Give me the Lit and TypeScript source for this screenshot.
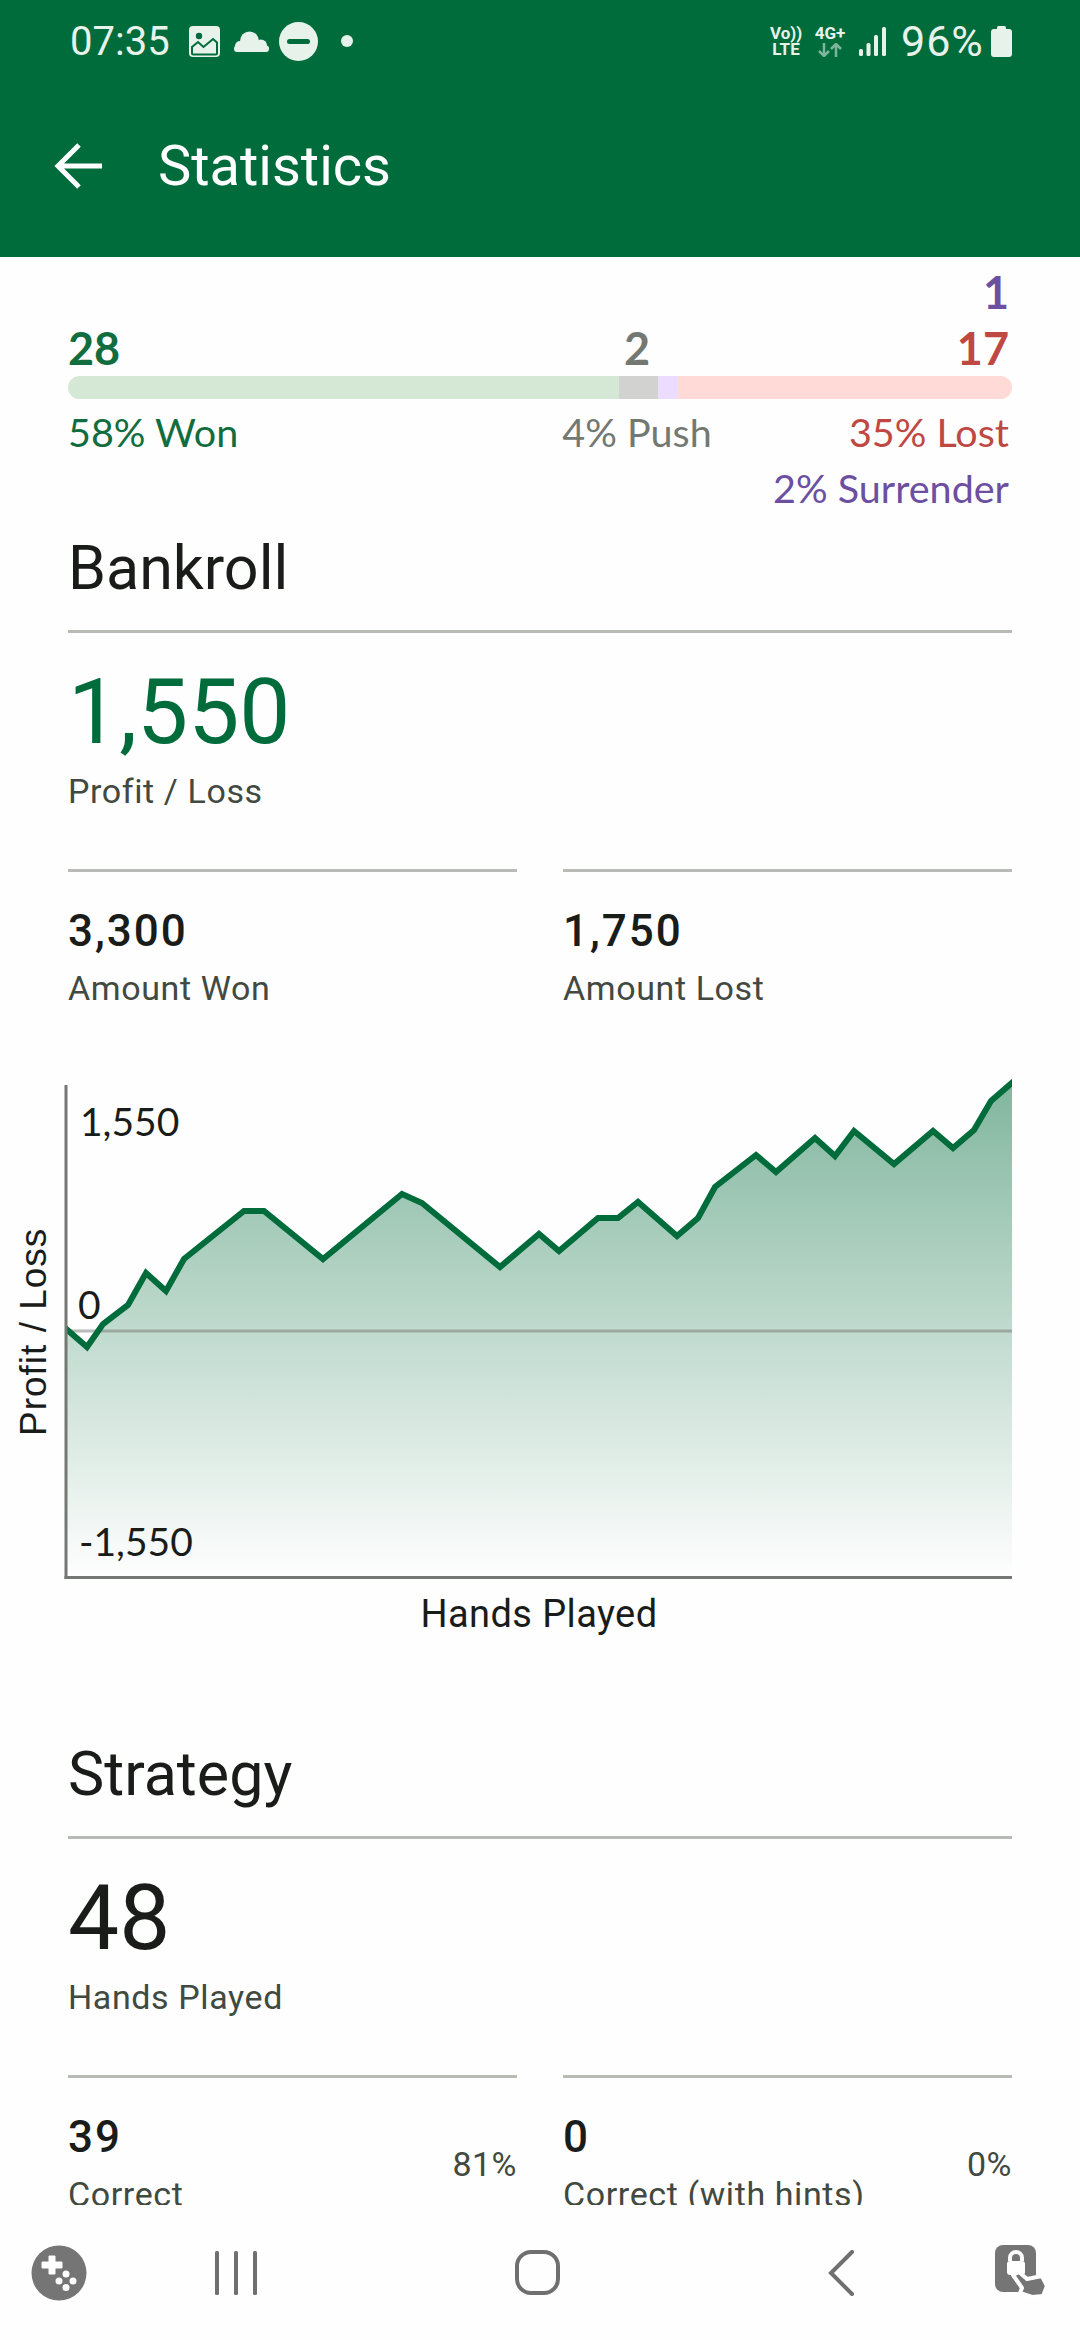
import { LitElement, html, css } from 'lit';
import { customElement } from 'lit/decorators.js';

// chart polyline, screen coordinates (svg viewBox starts at y=1060)
const CURVE: [number, number][] = [
  [64, 1328], [87, 1348], [103, 1325], [128, 1306], [146, 1274], [166, 1292], [184, 1260],
  [244, 1212], [264, 1212], [323, 1260], [402, 1195], [422, 1204], [500, 1268], [539, 1235],
  [559, 1252], [598, 1219], [618, 1219], [638, 1203], [677, 1237], [698, 1219], [715, 1188],
  [756, 1156], [776, 1173], [815, 1139], [835, 1157], [854, 1132], [894, 1165], [933, 1132],
  [953, 1149], [974, 1131], [991, 1102], [1014, 1082],
];

const TALLY = [
  { n: 28, color: '#d5e8d6' },
  { n: 2, color: '#d2d3d1' },
  { n: 1, color: '#ecdcff' },
  { n: 17, color: '#ffdad6' },
];

@customElement('app-root')
export class AppRoot extends LitElement {
  static styles = css`
    :host {
      display: block;
      width: 1080px;
      height: 2340px;
      background: #fefefe;
      font-family: Roboto, sans-serif;
      color: #1a1c19;
    }

    .screen {
      height: 2340px;
      display: flex;
      flex-direction: column;
      overflow: hidden;
    }

    /* Status bar and app bar */
    .top {
      background: #006c3b;
      height: 257px;
      flex: none;
    }

    .status {
      height: 80px;
      padding: 2px 68px 0 70px;
      display: flex;
      align-items: center;
      justify-content: space-between;
      color: #e7f2eb;
      font-size: 40px;
      box-sizing: border-box;
    }

    .status-group {
      display: flex;
      align-items: center;
    }

    .status svg {
      display: block;
      flex: none;
    }

    .volte {
      width: 32px;
      font-size: 17px;
      line-height: 16px;
      font-weight: 700;
      margin-right: 11px;
      text-align: center;
      white-space: nowrap;
    }

    .net {
      width: 34px;
      margin-right: 12px;
      font-size: 17px;
      line-height: 15px;
      font-weight: 700;
      text-align: center;
      white-space: nowrap;
    }

    .net svg {
      margin: 2px auto 0;
    }

    .battery-pct {
      margin-left: 15px;
      font-size: 43px;
      letter-spacing: 1px;
      width: 83px;
      white-space: nowrap;
    }

    .appbar {
      height: 177px;
      display: flex;
      align-items: center;
      color: #fff;
      padding-bottom: 6px;
      box-sizing: border-box;
    }

    .back {
      margin-left: 52px;
      margin-right: 56px;
      display: block;
    }

    .title {
      font-size: 56px;
      line-height: 64px;
    }

    /* Scrolling content */
    .content {
      flex: 1;
      min-height: 0;
      overflow: hidden;
      padding: 7px 68px 0;
    }

    .tally-line {
      display: grid;
      grid-template-columns: 419px 300px 1fr;
      font-family: Lato, sans-serif;
    }

    .tally-line > div:nth-child(2) {
      text-align: center;
    }

    .tally-line > div:nth-child(3) {
      text-align: right;
      padding-right: 3px;
    }

    .count {
      font-size: 45px;
      line-height: 56px;
      font-weight: 700;
    }

    .pct {
      font-size: 39.5px;
      line-height: 55px;
    }

    .bar {
      display: flex;
      height: 23px;
      border-radius: 12px;
      overflow: hidden;
    }

    .pct-first {
      margin-top: 5px;
      margin-bottom: 1px;
    }

    .pct-last {
      font-family: Lato, sans-serif;
      text-align: right;
      padding-right: 3px;
    }

    .won { color: #116d40; }
    .push { color: #747872; }
    .lost { color: #bf4843; }
    .surrender { color: #6c4fa0; }

    h2 {
      margin: 0;
      font-weight: 400;
      font-size: 61px;
      line-height: 70px;
    }

    .head {
      margin-top: 18px;
      padding-bottom: 27px;
      border-bottom: 3px solid #b8bab6;
    }

    .head.second {
      margin-top: 100px;
    }

    .big {
      font-size: 91px;
      line-height: 114px;
    }

    .big.green {
      color: #006c3b;
    }

    .label {
      font-size: 34px;
      line-height: 44px;
      letter-spacing: 0.6px;
      color: #424940;
      white-space: nowrap;
    }

    .hero {
      height: 236px;
      box-sizing: border-box;
      padding-top: 22px;
    }

    .cols {
      display: grid;
      grid-template-columns: 449px 449px;
      column-gap: 46px;
    }

    .cell {
      border-top: 3px solid #b8bab6;
      padding-top: 33px;
      display: flex;
      justify-content: space-between;
      align-items: center;
    }

    .num {
      font-size: 44px;
      line-height: 52px;
      font-weight: 500;
      letter-spacing: 2px;
      margin-bottom: 9px;
    }

    .side {
      font-size: 34px;
      color: #424940;
      letter-spacing: 0.5px;
    }

    .chart {
      display: block;
      margin: 49px -68px 0;
    }

    .chart .tick {
      font-family: Lato, sans-serif;
      font-size: 39px;
      fill: #1a1c19;
    }

    .chart .axis-y {
      font-family: 'Liberation Sans', sans-serif;
      font-size: 37px;
      fill: #1a1c19;
      letter-spacing: 1px;
    }

    .chart .axis-x {
      font-family: Roboto, sans-serif;
      font-size: 38px;
      fill: #1a1c19;
      letter-spacing: 0.4px;
    }

    /* System navigation */
    .nav {
      height: 135px;
      flex: none;
      background: #fefefe;
      display: grid;
      grid-template-columns: 118px 236px 368px 240px 118px;
      align-items: center;
      justify-items: center;
    }

    .nav svg {
      display: block;
    }
  `;

  private chart() {
    const line = CURVE.map(([x, y]) => `${x},${y}`).join(' ');
    const area = `66,1578 ${line} 1012,1578`;
    return html`
      <svg class="chart" width="1080" height="580" viewBox="0 1060 1080 580">
        <defs>
          <linearGradient id="fill" gradientUnits="userSpaceOnUse" x1="0" y1="1084" x2="0" y2="1578">
            <stop offset="0" stop-color="#006c3b" stop-opacity="0.49"></stop>
            <stop offset="1" stop-color="#006c3b" stop-opacity="0"></stop>
          </linearGradient>
          <clipPath id="plot">
            <rect x="66" y="1070" width="946" height="510"></rect>
          </clipPath>
        </defs>
        <g clip-path="url(#plot)">
          <polygon points=${area} fill="url(#fill)"></polygon>
          <rect x="66" y="1330.5" width="946" height="3" fill="#747872" fill-opacity="0.5"></rect>
          <polyline points=${line} fill="none" stroke="#006c3b" stroke-width="6"></polyline>
        </g>
        <rect x="64.500" y="1086" width="3" height="494" fill="#747872"></rect>
        <rect x="64.500" y="1577" width="947.500" height="3" fill="#747872"></rect>
        <text class="tick" x="80" y="1137">1,550</text>
        <text class="tick" x="78" y="1320">0</text>
        <text class="tick" x="79" y="1557">-1,550</text>
        <text class="axis-y" transform="translate(46 1437) rotate(-90)">Profit / Loss</text>
        <text class="axis-x" x="539" y="1628" text-anchor="middle">Hands Played</text>
      </svg>
    `;
  }

  render() {
    const total = TALLY.reduce((sum, t) => sum + t.n, 0);
    return html`
      <div class="screen">
        <div class="top">
          <div class="status">
            <div class="status-group">
              <span>07:35</span>
              <svg style="margin-left:19px" width="31" height="31" viewBox="0 0 31 31">
                <rect width="31" height="31" rx="4" fill="#e7f2eb"></rect>
                <circle cx="10" cy="10" r="3.200" fill="#006c3b"></circle>
                <path d="M3 27V21L9 16L14.500 21L24 13L28 16.500V27Q28 28.500 26.500 28.500H4.500Q3 28.500 3 27Z" fill="none" stroke="#006c3b" stroke-width="2"></path>
              </svg>
              <svg style="margin-left:14px" width="35" height="21" viewBox="0 0 35 21" fill="#e7f2eb">
                <circle cx="15.500" cy="10" r="9.500"></circle>
                <circle cx="6" cy="15" r="5"></circle>
                <circle cx="27" cy="14.500" r="6"></circle>
                <rect x="0" y="14.500" width="35" height="6.500" rx="3"></rect>
              </svg>
              <svg style="margin-left:10px" width="39" height="39" viewBox="0 0 39 39">
                <circle cx="19.500" cy="19.500" r="19.500" fill="#e7f2eb"></circle>
                <rect x="8" y="17" width="23" height="5" rx="2.500" fill="#006c3b"></rect>
              </svg>
              <svg style="margin-left:23px" width="12" height="12" viewBox="0 0 12 12">
                <circle cx="6" cy="6" r="6" fill="#e7f2eb"></circle>
              </svg>
            </div>
            <div class="status-group">
              <div class="volte">Vo))<br />LTE</div>
              <div class="net">
                4G+
                <svg width="26" height="14" viewBox="0 0 26 14" fill="none" stroke="#7fb59c" stroke-width="2.500">
                  <path d="M7 0V13M2 8L7 13L12 8"></path>
                  <path d="M19 14V1M14 6L19 1L24 6"></path>
                </svg>
              </div>
              <svg width="27" height="29" viewBox="0 0 27 29" fill="#e7f2eb">
                <rect x="0" y="22" width="4" height="7" rx="1.500"></rect>
                <rect x="7.500" y="16" width="4" height="13" rx="1.500"></rect>
                <rect x="15" y="8" width="4" height="21" rx="1.500"></rect>
                <rect x="23" y="0" width="4" height="29" rx="1.500"></rect>
              </svg>
              <span class="battery-pct">96%</span>
              <svg style="margin-left:7px" width="21" height="31" viewBox="0 0 21 31" fill="#e7f2eb">
                <rect x="6" y="0" width="9" height="4" rx="1.500"></rect>
                <rect x="0" y="3" width="21" height="28" rx="3"></rect>
              </svg>
            </div>
          </div>
          <div class="appbar">
            <svg class="back" width="50" height="50" viewBox="0 0 50 50" fill="none" stroke="#fff" stroke-width="5">
              <path d="M50 25H7M27 4L6 25L27 46"></path>
            </svg>
            <div class="title">Statistics</div>
          </div>
        </div>

        <div class="content">
          <div class="tally-line count">
            <div></div><div></div><div class="surrender">1</div>
          </div>
          <div class="tally-line count">
            <div class="won">28</div><div class="push">2</div><div class="lost">17</div>
          </div>
          <div class="bar">
            ${TALLY.map(
              (t) => html`<div style="width:${(t.n / total) * 100}%;background:${t.color}"></div>`
            )}
          </div>
          <div class="tally-line pct pct-first">
            <div class="won">58% Won</div><div class="push">4% Push</div><div class="lost">35% Lost</div>
          </div>
          <div class="pct pct-last surrender">2% Surrender</div>

          <div class="head"><h2>Bankroll</h2></div>
          <div class="hero">
            <div class="big green">1,550</div>
            <div class="label">Profit / Loss</div>
          </div>
          <div class="cols">
            <div class="cell"><div><div class="num">3,300</div><div class="label">Amount Won</div></div></div>
            <div class="cell"><div><div class="num">1,750</div><div class="label">Amount Lost</div></div></div>
          </div>
          ${this.chart()}

          <div class="head second"><h2>Strategy</h2></div>
          <div class="hero">
            <div class="big">48</div>
            <div class="label">Hands Played</div>
          </div>
          <div class="cols">
            <div class="cell">
              <div><div class="num">39</div><div class="label">Correct</div></div>
              <div class="side">81%</div>
            </div>
            <div class="cell">
              <div><div class="num">0</div><div class="label">Correct (with hints)</div></div>
              <div class="side">0%</div>
            </div>
          </div>
        </div>

        <div class="nav">
          <svg width="70" height="70" viewBox="0 0 70 70">
            <circle cx="35" cy="35" r="27.500" fill="#757575"></circle>
            <path d="M25 18H31V24H38V30H31V36H25V30H18V24H25Z" fill="#fff" stroke="#fff" stroke-width="1" stroke-linejoin="round"></path>
            <g fill="#fff">
              <circle cx="42" cy="36" r="3.500"></circle>
              <circle cx="35" cy="43" r="3.500"></circle>
              <circle cx="49" cy="43" r="3.500"></circle>
              <circle cx="42" cy="49.500" r="3.500"></circle>
            </g>
          </svg>
          <svg width="42" height="44" viewBox="0 0 42 44" fill="#6f6f6f">
            <rect x="0" y="0" width="4" height="44" rx="1.500"></rect>
            <rect x="19" y="0" width="4" height="44" rx="1.500"></rect>
            <rect x="38" y="0" width="4" height="44" rx="1.500"></rect>
          </svg>
          <svg width="46" height="46" viewBox="0 0 46 46" fill="none" stroke="#6f6f6f" stroke-width="4">
            <rect x="2" y="2" width="41" height="41" rx="14"></rect>
          </svg>
          <svg width="28" height="46" viewBox="0 0 28 46" fill="none" stroke="#6f6f6f" stroke-width="4" stroke-linecap="round">
            <path d="M24 2L3 23L24 44"></path>
          </svg>
          <svg width="70" height="70" viewBox="0 0 70 70">
            <rect x="9" y="7" width="41" height="47" rx="8" fill="#757575"></rect>
            <path d="M24 23V20A6 6 0 0 1 36 20V23" fill="none" stroke="#fff" stroke-width="4"></path>
            <rect x="21" y="23" width="18" height="14" rx="3" fill="#fff"></rect>
            <path d="M27 37L33 34L41 41L56 38L61 48L57 58L46 59L34 55L36 50Z" fill="#757575" stroke="#fff" stroke-width="4" stroke-linejoin="round"></path>
          </svg>
        </div>
      </div>
    `;
  }
}

declare global {
  interface HTMLElementTagNameMap {
    'app-root': AppRoot;
  }
}
